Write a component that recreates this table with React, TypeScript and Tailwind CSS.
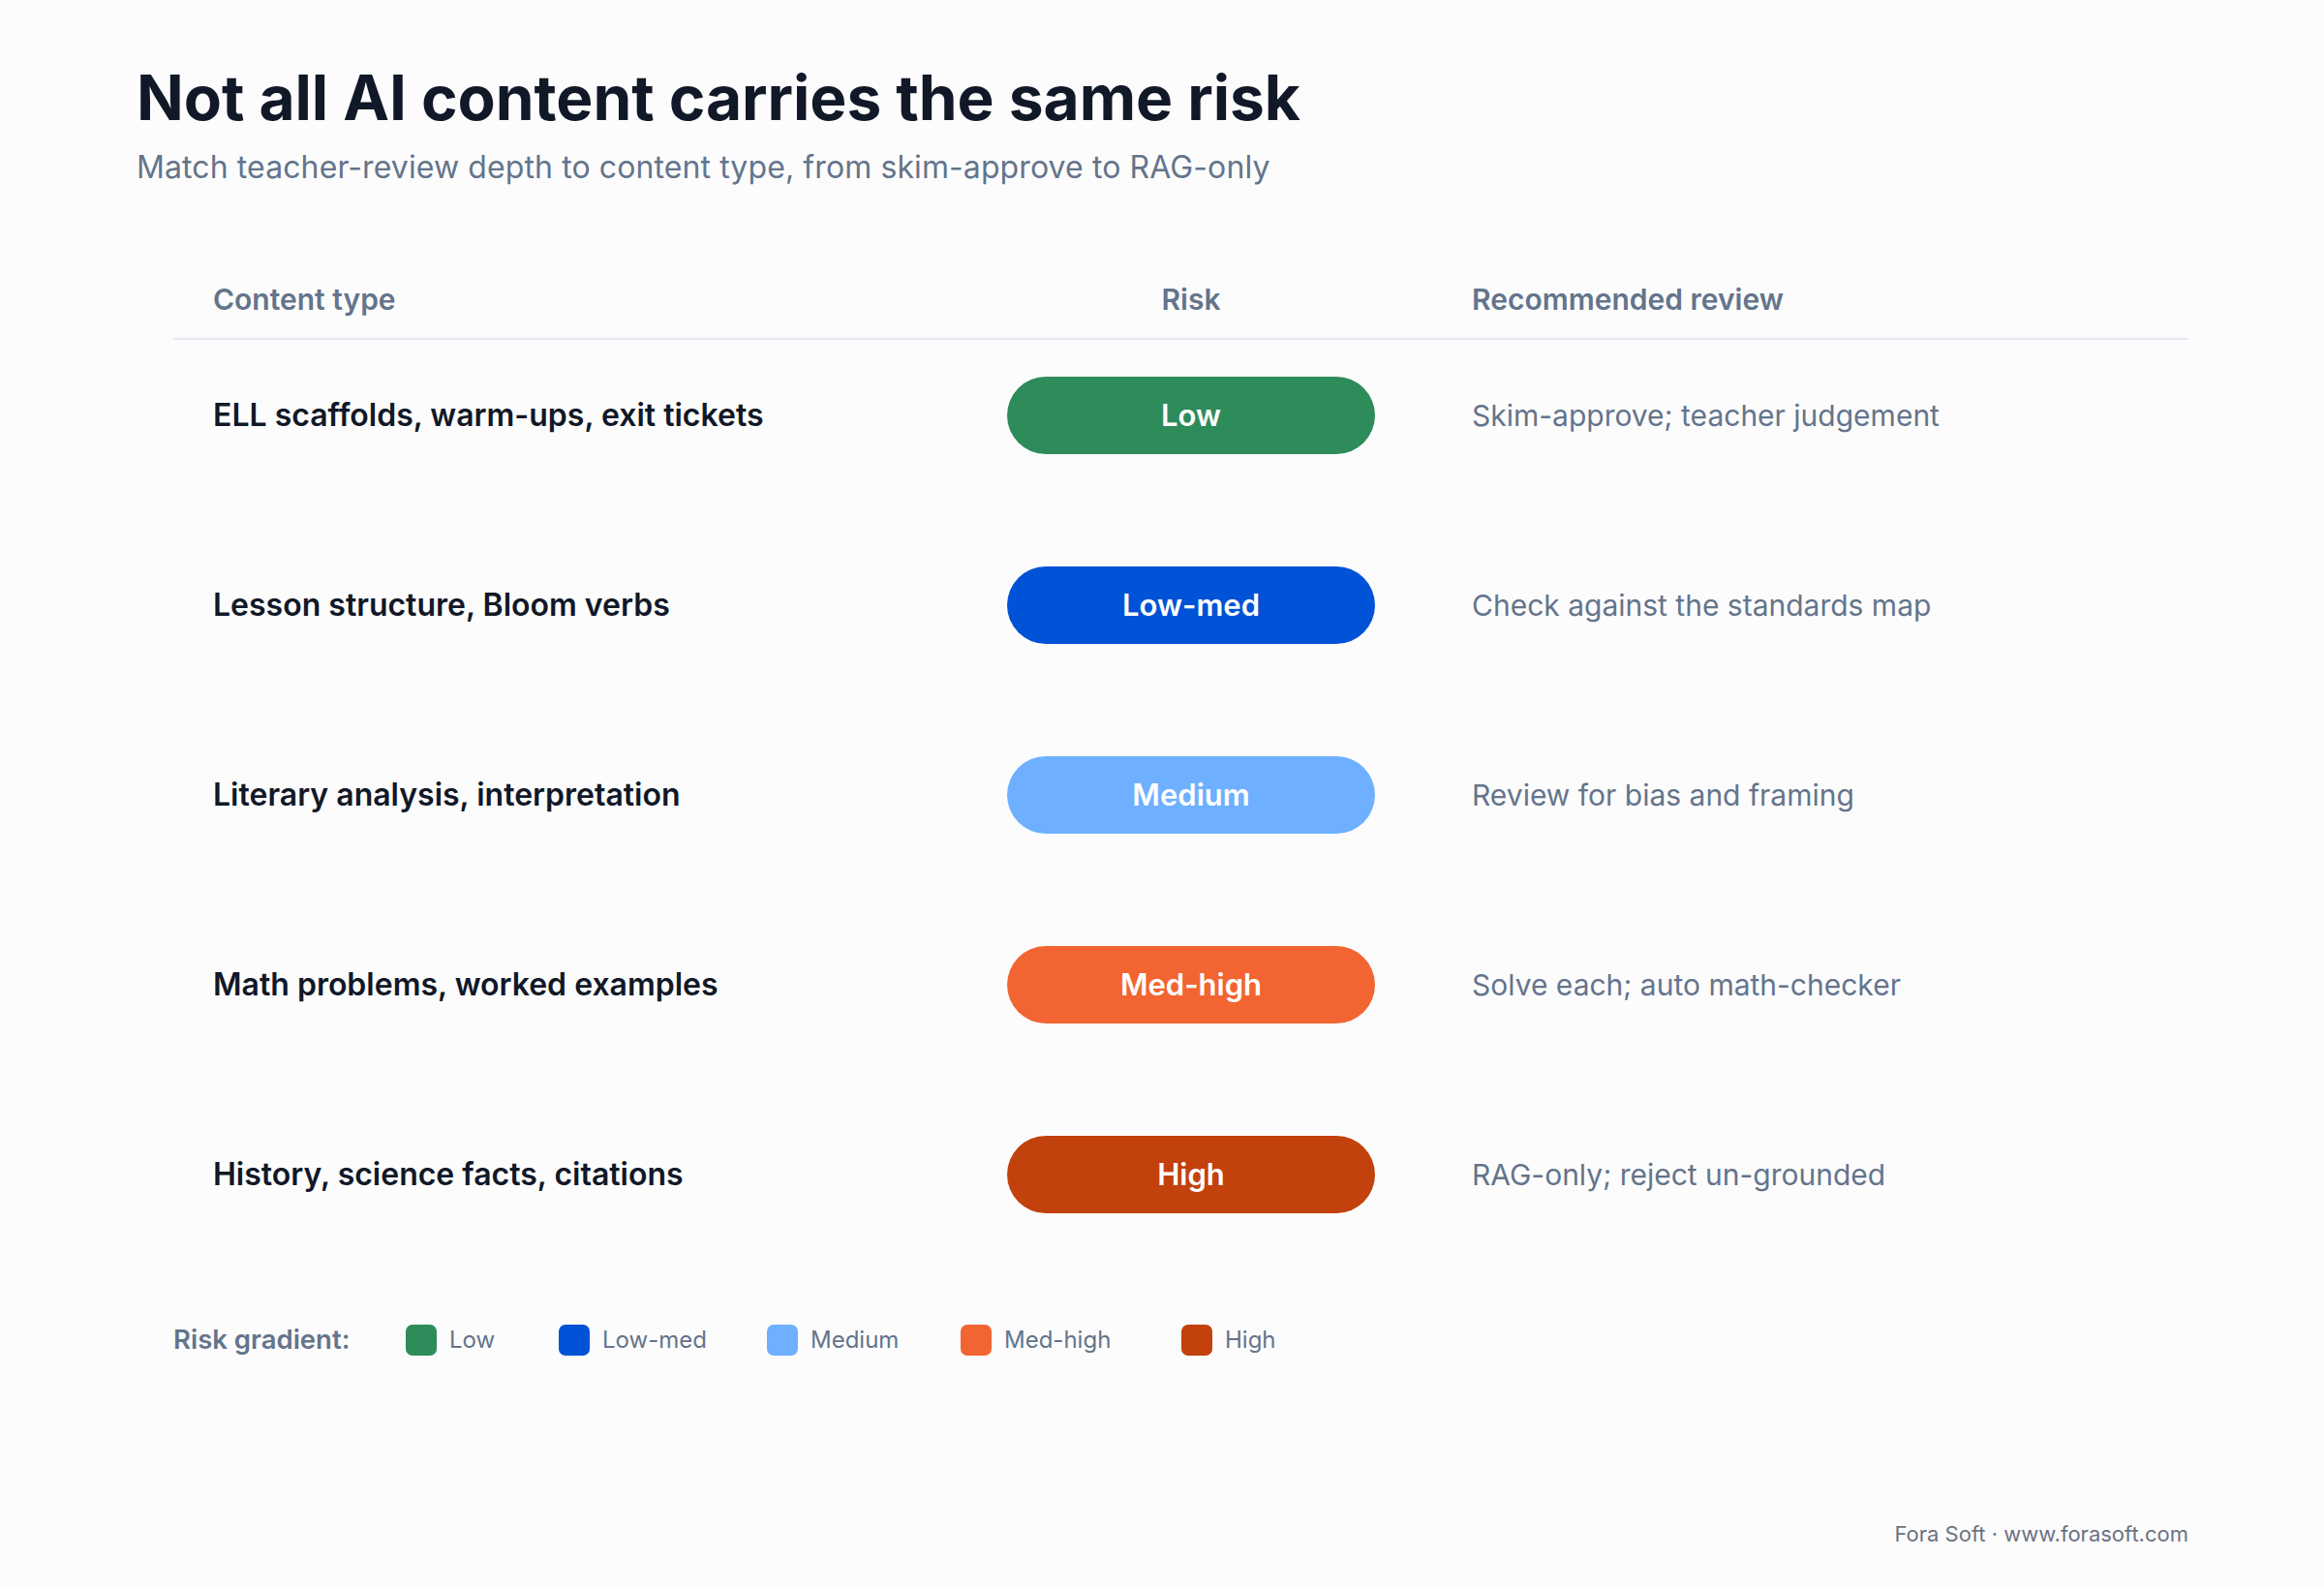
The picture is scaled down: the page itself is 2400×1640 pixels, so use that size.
const rows = [
  { type: "ELL scaffolds, warm-ups, exit tickets", risk: "Low", pill: "bg-[#2e8b5a]", review: "Skim-approve; teacher judgement", w: "w-[158px]" },
  { type: "Lesson structure, Bloom verbs", risk: "Low-med", pill: "bg-[#0052d6]", review: "Check against the standards map", w: "w-[215px]" },
  { type: "Literary analysis, interpretation", risk: "Medium", pill: "bg-[#6eb0ff]", review: "Review for bias and framing", w: "w-[200px]" },
  { type: "Math problems, worked examples", risk: "Med-high", pill: "bg-[#f26532]", review: "Solve each; auto math-checker", w: "w-[228px]" },
  { type: "History, science facts, citations", risk: "High", pill: "bg-[#c2410c]", review: "RAG-only; reject un-grounded", w: "" },
];

export default function App() {
  return (
    <div className="min-h-[1640px] flex flex-col bg-[#fcfcfd] pl-[141px] pr-[140px] font-['Inter',sans-serif]">
      <h1 className="mt-[69px] text-[64px] leading-none font-bold tracking-[-0.05px] text-[#111827]">
        Not all AI content carries the same risk
      </h1>
      <p className="mt-[24px] text-[32px] leading-none tracking-[0.1px] text-[#64748b]">
        Match teacher-review depth to content type, from skim-approve to RAG-only
      </p>

      <div className="ml-[38px] mt-[105px]">
        <div className="grid grid-cols-[861px_380px_1fr] pb-[25px] border-b-2 border-[#e2e8f0] text-[30px] leading-none font-semibold text-[#64748b]">
          <div className="pl-[41px]">Content type</div>
          <div className="text-center">Risk</div>
          <div className="pl-[100px]">Recommended review</div>
        </div>
        <div className="flex flex-col gap-[40px]">
          {rows.map((r) => (
            <div key={r.risk} className="grid grid-cols-[861px_380px_1fr] h-[156px] items-center">
              <div className="pl-[41px] text-[32px] font-semibold text-[#111827]">{r.type}</div>
              <div className={`h-[80px] rounded-full flex items-center justify-center text-[31px] font-semibold text-white ${r.pill}`}>
                {r.risk}
              </div>
              <div className="pl-[100px] text-[30px] text-[#64748b]">{r.review}</div>
            </div>
          ))}
        </div>

        <div className="mt-[77px] flex items-center h-[32px]">
          <span className="w-[240px] text-[27.5px] font-semibold text-[#64748b]">Risk gradient:</span>
          <div className="flex items-center">
            {rows.map((r) => (
              <div key={r.risk} className={`flex items-center gap-[13px] ${r.w}`}>
                <span className={`w-[32px] h-[32px] rounded-[7px] ${r.pill}`} />
                <span className="text-[24px] text-[#64748b]">{r.risk}</span>
              </div>
            ))}
          </div>
        </div>
      </div>

      <div className="mt-auto pb-[45px] text-right text-[22px] leading-none text-[#6b7280]">
        Fora Soft · www.forasoft.com
      </div>
    </div>
  );
}
